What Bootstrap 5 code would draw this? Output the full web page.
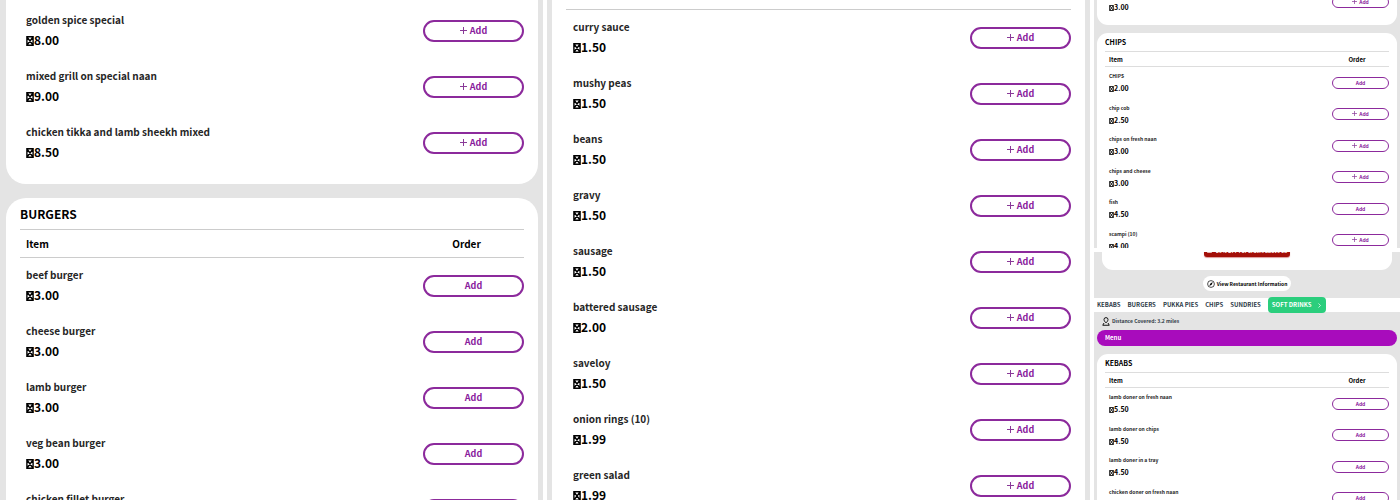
<!DOCTYPE html>
<html lang="en">
<head>
<meta charset="utf-8">
<meta name="viewport" content="width=device-width, initial-scale=1">
<title>Takeaway menu</title>
<link href="https://cdn.jsdelivr.net/npm/bootstrap@5.3.0/dist/css/bootstrap.min.css" rel="stylesheet">
<style>
body{font-family:"Noto Sans CJK JP",sans-serif;font-weight:700;color:#000;background:#fff}
.board{display:grid;grid-template-columns:minmax(0,543fr) minmax(0,543fr) minmax(0,306fr);gap:4px;height:100vh;overflow:hidden}
.pane{background:#e4e4e4;overflow:hidden;min-height:0;padding:0 5px 0 6px}
.pane-mid{padding:0 5px}
.stack{display:grid;grid-template-rows:minmax(0,1fr) minmax(0,1fr);gap:4px;min-height:0}
.stack .pane{padding:0 3px}
.sheet{--pad:14px;--cell:6px;background:#fff;border-radius:20px;padding:0 var(--pad) 13px;margin-bottom:14px}
.sheet.cut{border-top-left-radius:0;border-top-right-radius:0;padding-top:3px}
.pane-mid .sheet.cut{--cell:7px;padding-top:9px}
.sheet h2{font-size:12px;line-height:31px;margin:0;font-weight:700}
.items{width:100%;border-collapse:separate;border-spacing:0;font-size:10px}
.items th{border-top:1px solid #ccc;border-bottom:1px solid #ccc;height:29px;line-height:20px;padding:0 var(--cell);font-size:10px;font-weight:700}
.items th:last-child{text-align:center;padding:0 14px 0 0}
.items td{height:56px;padding:0 var(--cell) 2px;line-height:20px;vertical-align:middle}
.items td:last-child{width:101px;padding:0}
.lined{border-top:1px solid #ccc}
.dish{color:#262626}
.cost{font-size:12px}
.tofu{width:8px;height:10px;display:inline-block;vertical-align:-1px}
.add{display:flex;align-items:center;justify-content:center;gap:3px;width:100%;height:22px;padding:0;border:2px solid #8c2a9c;border-radius:11px;background:#fff;color:#8a1a9c;font-size:9px;line-height:16px;font-weight:700}
.add svg{width:7px;height:7px;margin-bottom:2px}
.stack .sheet{--pad:8px;--cell:4px;border-radius:11px;padding-bottom:8px;margin-bottom:8px}
.stack .sheet.cut{border-top-left-radius:0;border-top-right-radius:0;padding-top:0}
.stack .pull{margin-top:-14px}
.stack h2{font-size:7px;line-height:18px}
.stack .items{font-size:5px}
.stack .items th{height:16px;line-height:12px;padding-top:1px;font-size:6px;border-color:#ddd}
.stack .items th:last-child{padding-right:7px}
.stack .items td{height:32px;line-height:12px;padding-bottom:1px}
.stack .items tbody tr:nth-child(odd) td{height:31px}
.stack .items td:last-child{width:57px;padding-bottom:0}
.stack .cost{font-size:7px}
.stack .tofu{width:5px;height:6px}
.stack .add{height:12px;border-width:1px;font-size:5px;line-height:8px;gap:2px;border-radius:6px}
.stack .add svg{width:5px;height:5px;margin-bottom:1px}
.promo{background:#fff;border-radius:0 0 11px 11px;height:18px;margin:0 5px;overflow:hidden}
.offer{display:flex;align-items:center;gap:4px;width:86px;height:13px;margin:-8px auto 0;padding:0 3px;border:0;border-radius:3px;background:#a30f08;color:#fff;font-size:5px;line-height:10px;font-weight:700;white-space:nowrap;box-shadow:0 1px 1px #d99}
.offer svg{width:5px;height:5px;flex:none}
.info{display:flex;align-items:center;justify-content:center;gap:2px;width:88px;height:15px;margin:6px auto 7px;border:0;padding:0;border-radius:8px;background:#fff;color:#000;font-size:5px;line-height:10px;font-weight:700;white-space:nowrap}
.info svg{width:8px;height:8px;flex:none}
.cats{display:flex;align-items:center;gap:7px;background:#fff;height:14px;margin:0 -3px;padding:0 3px;font-size:6px;line-height:12px;white-space:nowrap}
.cats a{color:#2d3a48;text-decoration:none}
.cats .current{display:flex;align-items:center;justify-content:space-between;width:58px;height:16px;padding:0 5px 0 4px;border-radius:4px;background:#2bce7d;color:#fff}
.current svg{width:3px;height:5px}
.far{display:flex;align-items:center;gap:2px;font-size:5px;line-height:18px;color:#333c48;padding-left:5px}
.far svg{width:8px;height:9px}
.menubar{background:#a80cbc;color:#fff;border-radius:8px;font-size:6px;line-height:16px;padding:0 8px;margin:0 0 8px}
</style>
</head>
<body>
<svg class="d-none" aria-hidden="true">
<symbol id="box" viewBox="0 0 8 10"><path d="M.9.8H7.100V9.200H.9ZM1 1 7 9M7 1 1 9" fill="none" stroke="#000" stroke-width="1.400"/></symbol>
<symbol id="plus" viewBox="0 0 7 7"><path d="M3.5 0V7M0 3.5H7" stroke="#8a3a98" stroke-width="1"/></symbol>
</svg>
<main class="board">
<section class="pane">
<div class="sheet cut"><table class="items" data-rows="golden spice special|8.00|+;mixed grill on special naan|9.00|+;chicken tikka and lamb sheekh mixed|8.50|+"></table></div>
<div class="sheet"><h2>BURGERS</h2><table class="items" data-head data-rows="beef burger|3.00;cheese burger|3.00;lamb burger|3.00;veg bean burger|3.00;chicken fillet burger|3.00"></table></div>
</section>
<section class="pane pane-mid">
<div class="sheet cut"><div class="lined"><table class="items" data-rows="curry sauce|1.50|+;mushy peas|1.50|+;beans|1.50|+;gravy|1.50|+;sausage|1.50|+;battered sausage|2.00|+;saveloy|1.50|+;onion rings (10)|1.99|+;green salad|1.99|+"></table></div></div>
</section>
<div class="stack">
<section class="pane">
<div class="sheet cut pull"><table class="items" data-rows="&nbsp;|3.00|+"></table></div>
<div class="sheet"><h2>CHIPS</h2><table class="items" data-head data-rows="CHIPS|2.00;chip cob|2.50|+;chips on fresh naan|3.00|+;chips and cheese|3.00|+;fish|4.50;scampi (10)|4.00|+"></table></div>
</section>
<section class="pane">
<div class="promo"><button class="offer" type="button"><svg viewBox="0 0 5 5"><path d="M.5.5h4v4h-4z" fill="none" stroke="#fff" stroke-width=".7"/></svg>20% OFF For orders above £8</button></div>
<button class="info" type="button"><svg viewBox="0 0 16 16"><circle cx="8" cy="8" r="6.8" fill="none" stroke="#000" stroke-width="1.4"/><path d="M11.5 4 9.4 9.4 4.5 12 6.7 6.8Z"/></svg>View Restaurant Information</button>
<nav class="cats"><a href="#k">KEBABS</a><a href="#b">BURGERS</a><a href="#p">PUKKA PIES</a><a href="#c">CHIPS</a><a href="#s">SUNDRIES</a><a class="current" href="#d">SOFT DRINKS<svg viewBox="0 0 3 5"><path d="M.5.5 2.5 2.5.5 4.5" fill="none" stroke="#fff" stroke-width=".7"/></svg></a></nav>
<div class="far"><svg viewBox="0 0 16 18"><path d="M8 1.2a4 4 0 0 1 4 4C12 8 8 12 8 12S4 8 4 5.200a4 4 0 0 1 4-4ZM4 12 1.500 16.500h13L12 12" fill="none" stroke="#111" stroke-width="2"/></svg>Distance Covered: 3.2 miles</div>
<div class="menubar">Menu</div>
<div class="sheet" id="k"><h2>KEBABS</h2><table class="items" data-head data-rows="lamb doner on fresh naan|5.50;lamb doner on chips|4.50;lamb doner in a tray|4.50;chicken doner on fresh naan|5.50"></table></div>
</section>
</div>
</main>
<script>
document.querySelectorAll('.items').forEach(function(t){
  var head=t.hasAttribute('data-head')?'<thead><tr><th scope="col">Item</th><th scope="col">Order</th></tr></thead>':'';
  t.innerHTML=head+'<tbody>'+t.dataset.rows.split(';').map(function(r){
    var p=r.split('|');
    return '<tr><td><div class="dish">'+p[0]+'</div><div class="cost"><svg class="tofu" aria-hidden="true"><use href="#box"/></svg>'+p[1]+'</div></td><td><button class="add" type="button">'+(p[2]?'<svg aria-hidden="true"><use href="#plus"/></svg>':'')+'Add</button></td></tr>';
  }).join('')+'</tbody>';
});
</script>
<script src="https://cdn.jsdelivr.net/npm/bootstrap@5.3.0/dist/js/bootstrap.bundle.min.js"></script>
</body>
</html>
